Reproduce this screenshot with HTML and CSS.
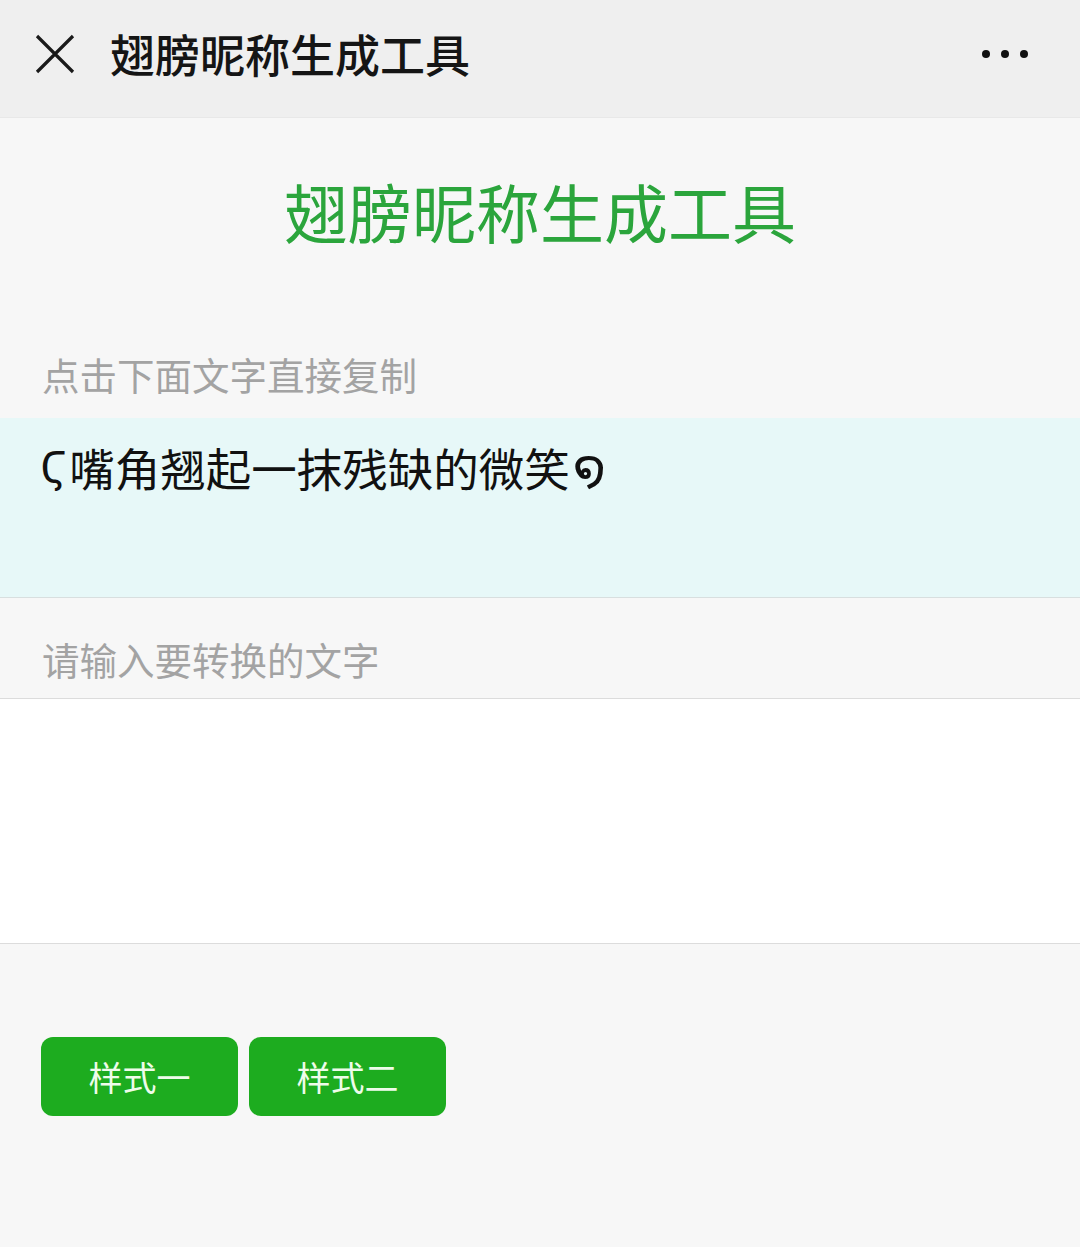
FILE: index.html
```html
<!DOCTYPE html>
<html lang="zh-CN">
<head>
    <meta charset="UTF-8">
    <meta name="viewport" content="width=device-width, initial-scale=1.0">
    <title>翅膀昵称生成工具</title>
    <link rel="stylesheet" href="styles.css">
</head>
<body>
    <div id="topBar">
        <div class="closeBtn">
            <svg width="40" height="40" viewBox="0 0 40 40">
                <path d="M2 2 L38 38 M38 2 L2 38" stroke="#1a1a1a" stroke-width="3.2" fill="none"/>
            </svg>
        </div>
        <h1 class="barTitle">翅膀昵称生成工具</h1>
        <div class="moreBtn">
            <span class="dot"></span><span class="dot"></span><span class="dot"></span>
        </div>
    </div>

    <div id="content">
        <h2 class="pageTitle">翅膀昵称生成工具</h2>

        <p class="hint">点击下面文字直接复制</p>
        <div id="result"><span class="wing wingLeft">Ϛ</span><span class="nick">嘴角翘起一抹残缺的微笑</span><span class="wing wingRight">໑</span></div>

        <p class="hint inputHint">请输入要转换的文字</p>
        <div class="inputBox">
            <textarea id="source"></textarea>
        </div>

        <div class="buttons">
            <button class="styleBtn">样式一</button>
            <button class="styleBtn">样式二</button>
        </div>
    </div>
</body>
</html>
```

FILE: styles.css
```css
/* Reset default margin and padding */
* {
    margin: 0;
    padding: 0;
    box-sizing: border-box;
}

body {
    font-family: "Noto Sans CJK SC", "Noto Sans", sans-serif;
    background-color: #f7f7f7;
    width: 1080px;
    min-height: 1247px;
}

/* Top navigation bar */
#topBar {
    height: 118px;
    padding: 0 52px 10px 35px;
    background-color: #efefef;
    border-bottom: 1px solid #e8e8e8;
    display: flex;
    align-items: center;
}

.closeBtn {
    width: 40px;
    height: 40px;
    margin-right: 35px;
    display: flex;
}

.barTitle {
    flex: 1;
    font-size: 45px;
    line-height: 45px;
    font-weight: 500;
    color: #151515;
}

.moreBtn {
    display: flex;
    gap: 11px;
}

.dot {
    width: 8px;
    height: 8px;
    border-radius: 50%;
    background-color: #111;
}

/* Main area */
.pageTitle {
    padding-top: 60px;
    text-align: center;
    font-size: 64px;
    line-height: 64px;
    font-weight: 400;
    color: #2ba53c;
}

.hint {
    margin-top: 113px;
    padding-left: 42px;
    font-size: 37.5px;
    line-height: 37px;
    color: #a3a3a3;
}

#result {
    margin-top: 26px;
    height: 180px;
    padding: 27px 0 0 40px;
    background-color: #e7f8f8;
    border-bottom: 1px solid #d8dfdf;
    display: flex;
    align-items: center;
    align-content: flex-start;
    flex-wrap: wrap;
    font-size: 45.5px;
    line-height: 45px;
    color: #111;
}

/* decorative wing symbols on both ends */
.wing {
    font-family: "DejaVu Sans", sans-serif;
    line-height: 45px;
}

.wingLeft {
    font-size: 42px;
    margin-right: 2px;
}

.wingRight {
    font-size: 52px;
    margin-left: 3px;
}

.inputHint {
    margin-top: 0;
    height: 101px;
    padding-top: 42px;
    border-bottom: 1px solid #dcdcdc;
}

.inputBox {
    height: 245px;
    background-color: #fff;
    border-bottom: 1px solid #dcdcdc;
}

#source {
    width: 100%;
    height: 100%;
    border: none;
    outline: none;
    resize: none;
    background: transparent;
}

/* Style buttons */
.buttons {
    margin-top: 93px;
    padding-left: 41px;
    display: flex;
    gap: 11px;
}

.styleBtn {
    width: 197px;
    height: 79px;
    border: none;
    border-radius: 12px;
    background-color: #1dac1f;
    color: #eefcea;
    font-family: "Noto Sans CJK SC", sans-serif;
    font-size: 34px;
    cursor: pointer;
}
```
